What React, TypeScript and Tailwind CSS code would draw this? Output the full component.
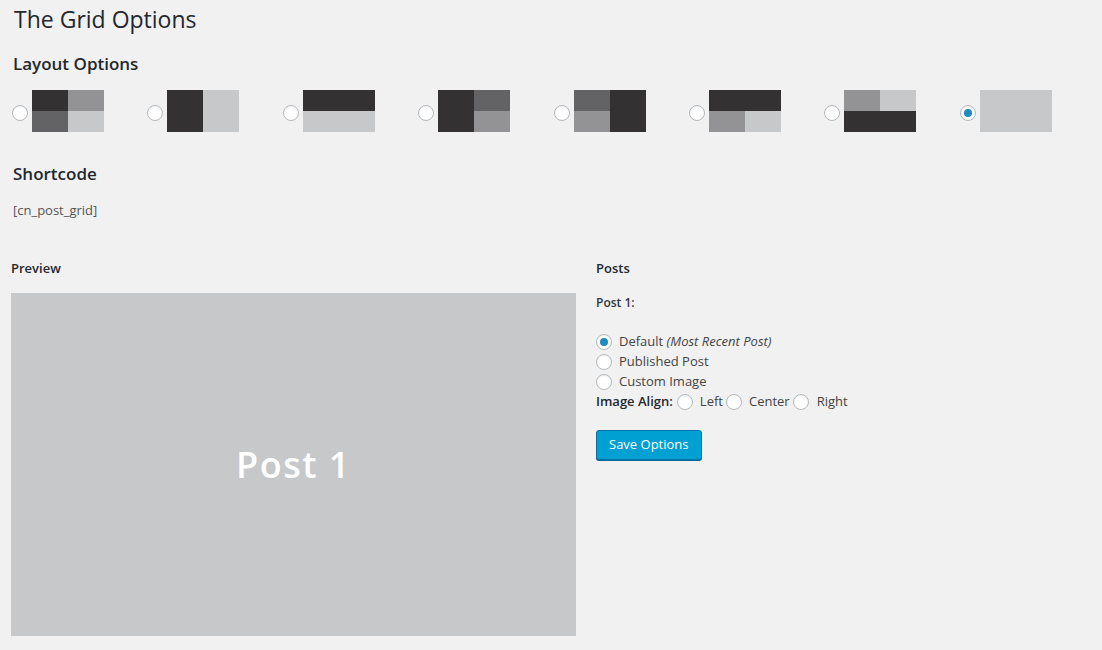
const DARK = "bg-[#333132]"
const MIDDARK = "bg-[#636365]"
const MID = "bg-[#939396]"
const LIGHT = "bg-[#c7c8ca]"

type Cell = { cls: string; col: string; row: string }

const layouts: Cell[][] = [
    [
        { cls: DARK, col: "col-start-1", row: "row-start-1" },
        { cls: MID, col: "col-start-2", row: "row-start-1" },
        { cls: MIDDARK, col: "col-start-1", row: "row-start-2" },
        { cls: LIGHT, col: "col-start-2", row: "row-start-2" },
    ],
    [
        { cls: DARK, col: "col-start-1", row: "row-span-2" },
        { cls: LIGHT, col: "col-start-2", row: "row-span-2" },
    ],
    [
        { cls: DARK, col: "col-span-2", row: "row-start-1" },
        { cls: LIGHT, col: "col-span-2", row: "row-start-2" },
    ],
    [
        { cls: DARK, col: "col-start-1", row: "row-span-2" },
        { cls: MIDDARK, col: "col-start-2", row: "row-start-1" },
        { cls: MID, col: "col-start-2", row: "row-start-2" },
    ],
    [
        { cls: MIDDARK, col: "col-start-1", row: "row-start-1" },
        { cls: DARK, col: "col-start-2", row: "row-span-2" },
        { cls: MID, col: "col-start-1", row: "row-start-2" },
    ],
    [
        { cls: DARK, col: "col-span-2", row: "row-start-1" },
        { cls: MID, col: "col-start-1", row: "row-start-2" },
        { cls: LIGHT, col: "col-start-2", row: "row-start-2" },
    ],
    [
        { cls: MID, col: "col-start-1", row: "row-start-1" },
        { cls: LIGHT, col: "col-start-2", row: "row-start-1" },
        { cls: DARK, col: "col-span-2", row: "row-start-2" },
    ],
    [{ cls: LIGHT, col: "col-span-2", row: "row-span-2" }],
]

function Radio({ checked = false, className = "" }: { checked?: boolean; className?: string }) {
    return (
        <span
            className={`flex items-center justify-center w-[16px] h-[16px] shrink-0 rounded-full bg-white border border-[#b4b9be] shadow-[inset_0_1px_2px_rgba(0,0,0,0.07)] ${className}`}
        >
            {checked && <span className="w-[8px] h-[8px] rounded-full bg-[#1e8cbe]" />}
        </span>
    )
}

export default function App() {
    return (
        <main className="min-h-[650px] w-full bg-[#f1f1f1] text-[#444] font-['Open_Sans',sans-serif]">
            <h1 className="pt-[5px] pl-[14px] text-[23px] leading-[29px] text-[#23282d]">The Grid Options</h1>

            <h2 className="mt-[19px] pl-[13px] text-[17px] leading-[22px] font-semibold text-[#23282d]">Layout Options</h2>

            <div className="flex mt-[15px] pl-[12px]">
                {layouts.map((cells, i) => (
                    <div key={i} className="flex items-center gap-[4px] w-[135.4px] shrink-0">
                        <Radio checked={i === 7} className="mt-[4px]" />
                        <div className="grid grid-cols-2 grid-rows-2 w-[72px] h-[42px]">
                            {cells.map((c, j) => (
                                <div key={j} className={`${c.cls} ${c.col} ${c.row}`} />
                            ))}
                        </div>
                    </div>
                ))}
            </div>

            <h2 className="mt-[31px] pl-[13px] text-[17px] leading-[22px] font-semibold text-[#23282d]">Shortcode</h2>
            <p className="mt-[16px] pl-[13px] text-[13px] leading-[18px] text-[#555]">[cn_post_grid]</p>

            <div className="flex gap-[20px] mt-[40px] pl-[11px]">
                <section className="w-[565px] shrink-0">
                    <h3 className="text-[13px] leading-[18px] font-semibold text-[#23282d]">Preview</h3>
                    <div className="flex items-center justify-center mt-[16px] h-[343px] bg-[#c7c8ca]">
                        <span className="text-[36px] font-semibold tracking-[1.5px] text-white">Post 1</span>
                    </div>
                </section>

                <section className="flex flex-col text-[13px]">
                    <h3 className="leading-[18px] font-semibold text-[#23282d]">Posts</h3>
                    <p className="mt-[18px] text-[12px] leading-[16px] font-semibold text-[#32373c]">Post 1:</p>

                    <div className="flex flex-col mt-[21px]">
                        <label className="flex items-center gap-[7px] h-[20px]">
                            <Radio checked />
                            <span>
                                Default <i>(Most Recent Post)</i>
                            </span>
                        </label>
                        <label className="flex items-center gap-[7px] h-[20px]">
                            <Radio />
                            <span>Published Post</span>
                        </label>
                        <label className="flex items-center gap-[7px] h-[20px]">
                            <Radio />
                            <span>Custom Image</span>
                        </label>
                        <div className="flex items-center h-[20px]">
                            <b className="font-semibold text-[13px] text-[#23282d] mr-[4px]">Image Align:</b>
                            <Radio />
                            <span className="ml-[7px] mr-[3px]">Left</span>
                            <Radio />
                            <span className="ml-[7px] mr-[3px]">Center</span>
                            <Radio />
                            <span className="ml-[8px]">Right</span>
                        </div>
                    </div>

                    <button className="self-start mt-[18px] h-[30px] px-[12px] rounded-[3px] bg-[#00a0d2] border border-[#0073aa] shadow-[0_1px_0_#006799] text-[13px] text-white">
                        Save Options
                    </button>
                </section>
            </div>
        </main>
    )
}
